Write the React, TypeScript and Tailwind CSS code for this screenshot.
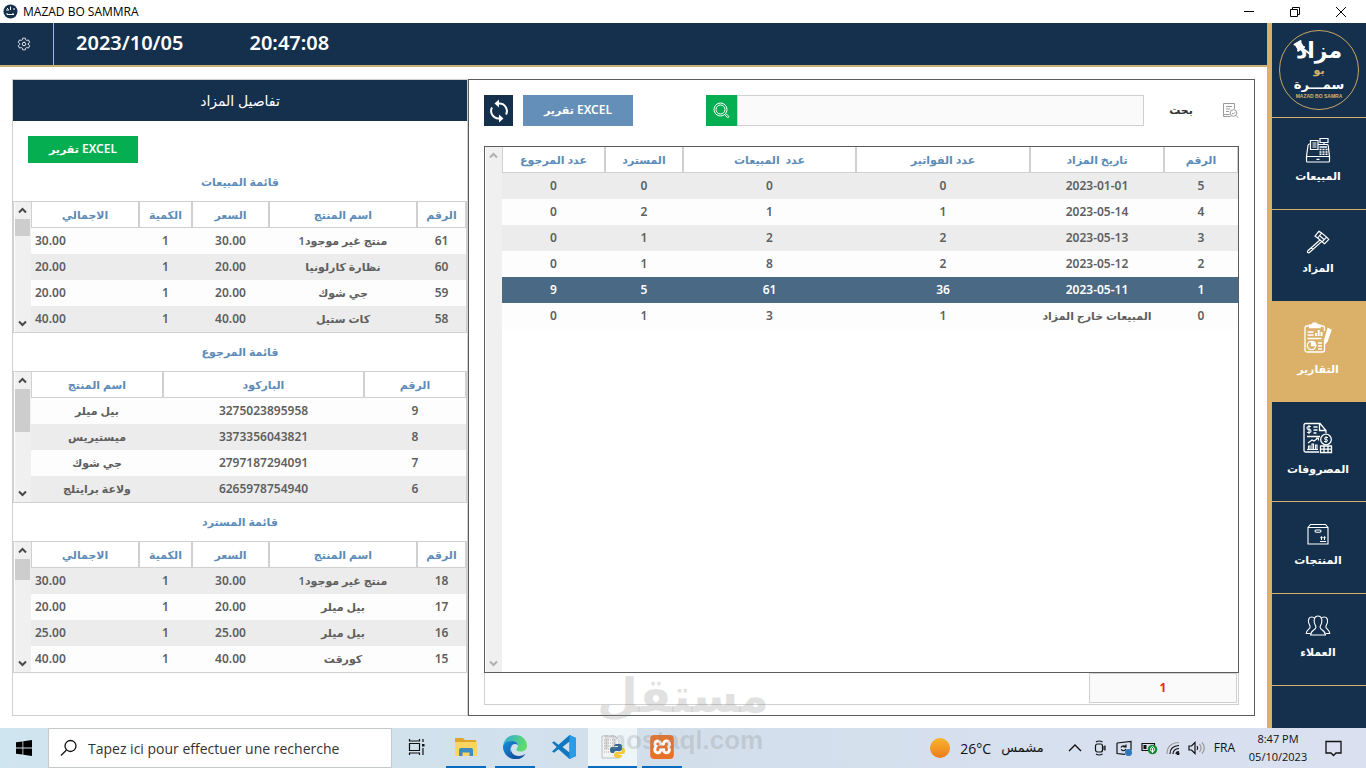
import type { ReactNode } from "react";
import { IoSettingsOutline } from "react-icons/io5";
import { SiXampp } from "react-icons/si";

type Column = { label: string; width: string; left?: boolean };

const saleColumns: Column[] = [
  { label: "الاجمالي", width: "w-[108px]", left: true },
  { label: "الكمية", width: "w-[53px]" },
  { label: "السعر", width: "w-[77px]" },
  { label: "اسم المنتج", width: "w-[148px]" },
  { label: "الرقم", width: "w-[49px]" },
];

const returnColumns: Column[] = [
  { label: "اسم المنتج", width: "w-[132px]" },
  { label: "الباركود", width: "w-[201px]" },
  { label: "الرقم", width: "w-[102px]" },
];

const auctionColumns: Column[] = [
  { label: "عدد المرجوع", width: "w-[103px]" },
  { label: "المسترد", width: "w-[78px]" },
  { label: "عدد  المبيعات", width: "w-[173px]" },
  { label: "عدد الفواتير", width: "w-[174px]" },
  { label: "تاريخ المزاد", width: "w-[134px]" },
  { label: "الرقم", width: "w-[74px]" },
];

const sales = [
  ["30.00", "1", "30.00", "منتج غير موجود1", "61"],
  ["20.00", "1", "20.00", "نظارة كارلونيا", "60"],
  ["20.00", "1", "20.00", "جي شوك", "59"],
  ["40.00", "1", "40.00", "كات ستيل", "58"],
];

const returned = [
  ["بيل ميلر", "3275023895958", "9"],
  ["ميستيريس", "3373356043821", "8"],
  ["جي شوك", "2797187294091", "7"],
  ["ولاعة برايتلج", "6265978754940", "6"],
];

const refunded = [
  ["30.00", "1", "30.00", "منتج غير موجود1", "18"],
  ["20.00", "1", "20.00", "بيل ميلر", "17"],
  ["25.00", "1", "25.00", "بيل ميلر", "16"],
  ["40.00", "1", "40.00", "كورقت", "15"],
];

const auctions = [
  ["0", "0", "0", "0", "2023-01-01", "5"],
  ["0", "2", "1", "1", "2023-05-14", "4"],
  ["0", "1", "2", "2", "2023-05-13", "3"],
  ["0", "1", "8", "2", "2023-05-12", "2"],
  ["9", "5", "61", "36", "2023-05-11", "1"],
  ["0", "1", "3", "1", "المبيعات خارج المزاد", "0"],
];

function Arrow({ up = false, muted = false }: { up?: boolean; muted?: boolean }) {
  return (
    <svg width="9" height="7" viewBox="0 0 9 7" fill="none" stroke={muted ? "#b0b0b0" : "#484848"} strokeWidth="2">
      <path d={up ? "M1 5.5 4.5 2 8 5.5" : "M1 1.5 4.5 5 8 1.5"} />
    </svg>
  );
}

function ScrollBar({ thumb, muted }: { thumb?: string; muted?: boolean }) {
  return (
    <div className="flex w-[17px] shrink-0 flex-col border-x border-l-white border-r-[#f0f0f0] bg-[#f0f0f0]">
      <button aria-label="Scroll up" className="flex h-[17px] items-center justify-center">
        <Arrow up muted={muted} />
      </button>
      <div className="flex-1">{thumb && <div className={`${thumb} bg-[#cdcdcd]`} />}</div>
      <button aria-label="Scroll down" className="flex h-[17px] items-center justify-center">
        <Arrow muted={muted} />
      </button>
    </div>
  );
}

function DataTable({
  label,
  columns,
  rows,
  shade,
  selected,
}: {
  label: string;
  columns: Column[];
  rows: string[][];
  shade: 0 | 1;
  selected?: number;
}) {
  return (
    <table aria-label={label} className="w-full table-fixed border-separate border-spacing-0 self-start text-[12px] leading-4">
      <thead>
        <tr className="h-[26px] text-[#5d8cb8]">
          {columns.map((c, i) => (
            <th
              key={i}
              dir="auto"
              className={`${c.width} whitespace-pre border-x border-b border-[#d0d0d0] bg-white p-0 text-center text-[11px] font-semibold`}
            >
              {c.label}
            </th>
          ))}
        </tr>
      </thead>
      <tbody>
        {rows.map((row, r) => (
          <tr
            key={r}
            className={`h-[26px] ${
              r === selected ? "bg-[#496984] text-white" : r % 2 === shade ? "bg-[#ececec] text-[#5f5f5f]" : "bg-[#fdfdfd] text-[#5f5f5f]"
            }`}
          >
            {row.map((cell, i) => (
              <td
                key={i}
                dir="auto"
                className={`whitespace-nowrap py-0 font-semibold ${columns[i].left ? "px-1 text-left" : "px-0 text-center"} ${
                  /[0-9]{2}|^[0-9]$/.test(cell) ? "text-[12px]" : "text-[11px]"
                }`}
              >
                {cell}
              </td>
            ))}
          </tr>
        ))}
      </tbody>
    </table>
  );
}

function SideList({ title, thumb, children }: { title: string; thumb: string; children: ReactNode }) {
  return (
    <section>
      <h2 dir="rtl" className="flex h-[38px] items-center justify-center text-[11px] font-semibold text-[#5d8cb8]">
        {title}
      </h2>
      <div className="flex h-[132px] border border-[#d0d0d0]">
        <ScrollBar thumb={thumb} />
        {children}
      </div>
    </section>
  );
}

function NavItem({ label, tall, active, children }: { label: string; tall?: boolean; active?: boolean; children: ReactNode }) {
  return (
    <a
      href="#"
      className={`flex flex-col items-center border-b border-[#dbb068] pr-0.5 text-white ${tall ? "h-[100px] gap-[7px] pt-5" : "h-[92px] gap-1 pt-[18px]"} ${
        active ? "bg-[#dbb068]" : ""
      }`}
    >
      <span className={`flex w-8 items-center justify-center ${tall ? "h-8" : "h-7"}`}>{children}</span>
      <span dir="rtl" className="text-[11px] leading-4 font-bold">
        {label}
      </span>
    </a>
  );
}

function RegisterIcon() {
  return (
    <svg width="26" height="26" viewBox="0 0 26 26" fill="none" stroke="white" strokeWidth="1.2">
      <path d="M1.5 19.5h23v4.5a1 1 0 0 1-1 1h-21a1 1 0 0 1-1-1zM1.500 19.5 3 8.500q.3-1.500 1.600-1.500h1M13 7.500h9q1 0 1.200 1l1.300 11M11.500 22.300h3" />
      <path d="M5.500 3.500h7.500v9H5.500zM7.500 6h4M7.500 8h4M7.500 10h4M15 1.500h8v4h-8zM19 5.500v2" />
      <path d="M14.500 10h7.500" strokeWidth="1.500" />
      <path d="M14.500 12.500h8M14.500 15h8M14.500 17.300h8" strokeWidth="1.600" strokeDasharray="2 1" />
    </svg>
  );
}

function GavelIcon() {
  return (
    <svg width="24" height="24" viewBox="0 0 24 24" fill="none" stroke="white" strokeWidth="1.2" strokeLinejoin="round">
      <path d="M9 6.200 13 1.200l2.600 1.800-3.900 5zM18.500 13.800l4.300-4.500-2.200-2.200-4.500 4.700zM11.700 8l4.400 3.800M15.600 3l5 4.100M14 6l4 3.500M13.700 10.300 1.800 20.800q-.8 1 .1 1.700.9.700 1.800-.2L15.300 11.900M5.300 18l1.500 1.500" />
    </svg>
  );
}

function ReportIcon() {
  return (
    <svg width="28" height="32" viewBox="0 0 28 32" fill="none" stroke="white" strokeWidth="1.3">
      <path d="M20.500 20v8a2 2 0 0 1-2 2H3a2 2 0 0 1-2-2V6a2 2 0 0 1 2-2h15.500a2 2 0 0 1 2 2v3" />
      <path d="M5.500 5.500V3H8q.5-2 2.700-2t2.800 2H16v2.500z" fill="white" />
      <path d="M3.500 10h6M3.500 13h6M3.500 16.500h14M14 21h4M14 24h4M14 27h4" />
      <path d="M12 14V11M14.700 14V8M17.500 14v-4" strokeWidth="2" />
      <circle cx="7.500" cy="23.500" r="4.200" />
      <path d="M7.500 19.300v4.200h4.200a4.200 4.200 0 0 0-4.200-4.200" fill="white" />
      <path d="m24 6.500 3 1.500-4 11.500-2.300 2.500-.2-3.500z" fill="white" />
    </svg>
  );
}

function ExpensesIcon() {
  return (
    <svg width="30" height="32" viewBox="0 0 30 32" fill="none" stroke="white" strokeWidth="1.3">
      <path d="M23 11V8.500l-6-7H2.500A1.500 1.500 0 0 0 1 3v25.500A1.500 1.500 0 0 0 2.500 30H16M16.500 1.500v7H23M10.500 5h4M10.500 8h4M10.500 11h3M4 14.500h13" />
      <path d="M7.800 4.500H5.500a1 1 0 0 0 0 3h1a1 1 0 0 1 0 3H4.200M6 3v9M4 27.500h11M5.500 27v-3h1.500v3M9 27v-5h1.500v5M12.500 27v-4H14v4M5 21l4-3 2 1 4-3M13 16h2.500v2.500" strokeWidth="1.100" />
      <circle cx="23" cy="17.500" r="5.300" fill="#15304d" />
      <path d="M25 15.500h-2.500a1 1 0 0 0 0 2h1a1 1 0 0 1 0 2H21M23 14v7" strokeWidth="1" />
      <path d="M17.500 24h11v6.500h-11zM17.500 27.200h11M21 24v6.500M25 24v6.500" />
    </svg>
  );
}

function BoxIcon() {
  return (
    <svg width="22" height="22" viewBox="0 0 22 22" fill="none" stroke="white" strokeWidth="1.1">
      <path d="M1 4.500h20V21H1zM1 4.500 3.500 1.500h15L21 4.500M13 18.500h6M14.500 17v-3M17.500 17v-3M13.500 15l1-1.200 1 1.200M16.500 15l1-1.200 1 1.200" />
      <rect x="8" y="7" width="6" height="2.200" rx="1.1" />
    </svg>
  );
}

function PeopleIcon() {
  return (
    <svg width="26" height="22" viewBox="0 0 26 22" fill="none" stroke="white" strokeWidth="1.1" strokeLinejoin="round">
      <path d="M10 3.500Q9 2 6.700 2C4 2 3 4.500 3.600 7.500c.4 2 1.500 2.500 1.500 4.500 0 2-3.700 2.500-3.900 6.500H5M16 3.500Q17 2 19.300 2c2.700 0 3.700 2.500 3.100 5.500-.4 2-1.500 2.500-1.500 4.500 0 2 3.700 2.500 3.900 6.500H21" />
      <path d="M13 1C9.500 1 8.800 4 9.300 7.500c.3 2 1.600 3 1.600 5 0 2.500-5 2-5.400 7.500h15c-.4-5.500-5.400-5-5.400-7.500 0-2 1.300-3 1.600-5C17.200 4 16.500 1 13 1z" />
    </svg>
  );
}

function Logo() {
  return (
    <div className="flex h-[95px] items-center justify-center border-b border-[#dbb068]">
      <div
        dir="rtl"
        className="relative flex size-20 flex-col items-center rounded-full border border-[#c9a563] pt-1.5 font-['DejaVu_Sans',sans-serif] font-bold text-white"
      >
        <span className="text-[22px] leading-[27px]">مزاد</span>
        <span className="text-[11px] leading-[13px] text-[#dbb068]">بو</span>
        <span className="text-[13px] leading-4">سمـــرة</span>
        <span dir="ltr" className="font-['Liberation_Sans',sans-serif] text-[5px] leading-[6px] whitespace-nowrap text-[#dbb068]">
          MAZAD BO SAMRA
        </span>
        <svg className="absolute top-2 left-3" width="20" height="18" viewBox="0 0 20 18">
          <g transform="rotate(-30 8 7)" fill="white">
            <rect x="4" y="3" width="7" height="7" />
            <rect x="3" y="2" width="9" height="2" rx="1" />
            <rect x="3" y="9" width="9" height="2" rx="1" />
          </g>
          <path d="m10 9 8 6" stroke="white" strokeWidth="2" />
        </svg>
      </div>
    </div>
  );
}

function TaskButton({ label, open, current, children }: { label: string; open?: boolean; current?: boolean; children: ReactNode }) {
  return (
    <button
      aria-label={label}
      className={`flex h-10 w-[49px] flex-col items-center ${current ? "bg-[#edf5f9]" : ""}`}
    >
      <span className="flex flex-1 items-center">{children}</span>
      <span className={`h-0.5 ${current ? "w-full" : "w-10"} ${open ? "bg-[#0a6cc0]" : ""}`} />
    </button>
  );
}

function Taskbar() {
  return (
    <footer className="flex h-10 shrink-0 items-center bg-linear-to-r from-[#cfe5ef] via-[#d2dfeb] to-[#dae0f0] font-['Open_Sans',sans-serif] text-[#111]">
      <button aria-label="Start" className="flex h-10 w-12 items-center justify-center">
        <svg width="16" height="16" viewBox="0 0 16 16">
          <path d="M0 2.300 6.500 1.400v6.200H0zM7.300 1.300 16 0v7.600H7.300zM0 8.400h6.500v6.200L0 13.700zM7.300 8.400H16V16l-8.700-1.300z" />
        </svg>
      </button>
      <label className="flex h-10 w-[344px] items-center gap-2.5 border border-[#c4c9cc] bg-white pr-3 pl-[11px]">
        <svg width="18" height="18" viewBox="0 0 18 18" fill="none" stroke="#111" strokeWidth="1.3">
          <circle cx="10.500" cy="7" r="5.500" />
          <path d="M6.500 11 1 16.500" />
        </svg>
        <input
          aria-label="Recherche"
          placeholder="Tapez ici pour effectuer une recherche"
          className="min-w-0 flex-1 bg-transparent text-[14px] outline-none placeholder:text-[#333]"
        />
      </label>
      <div className="flex items-center">
        <TaskButton label="Task view">
          <svg width="18" height="16" viewBox="0 0 18 16" fill="none" stroke="#111" strokeWidth="1.2">
            <path d="M1.500 4.500h10v7h-10zM1.500 0v2h10V0M1.500 16v-2h10v2M15 0v3M15 9v7" />
            <path d="M14 5h2.500v2.500H14z" fill="#111" stroke="none" />
          </svg>
        </TaskButton>
        <TaskButton label="Explorer" open>
          <svg width="24" height="20" viewBox="0 0 24 20">
            <path d="M1 1h8l2 2h11v16H1z" fill="#e0a62b" />
            <path d="M1 5h22v14H1z" fill="#fcd462" />
            <path d="M5 19v-6q0-2 2-2h10q2 0 2 2v6h-3.500v-3.500h-7V19z" fill="#3c8dc5" />
          </svg>
        </TaskButton>
        <TaskButton label="Edge" open>
          <svg width="24" height="24" viewBox="0 0 24 24">
            <defs>
              <linearGradient id="edge-top" x1="0" y1="0" x2="1" y2="0.3">
                <stop stopColor="#2aa7e0" />
                <stop offset="1" stopColor="#5fdc6a" />
              </linearGradient>
              <linearGradient id="edge-low" x1="0" y1="0" x2="1" y2="1">
                <stop stopColor="#1990d8" />
                <stop offset="1" stopColor="#0c479a" />
              </linearGradient>
            </defs>
            <path d="M0 11C1 4 6 0 12 0c7 0 12 5 12 10.500 0 4-3 6-6.500 6-3 0-4-1-4-2s1.500-1.500 1.500-4S12.500 6 9 6 2 8 0 11z" fill="url(#edge-top)" />
            <path d="M0 11c1.500-3.500 5-5 8.500-5 4 0 6.500 2 6.500 4.500-.5-1-2-1.500-3-1.500-3 0-4.500 3-4.500 6 0 5 5 8.500 10 8-2 .8-3.500 1-5.500 1C5 24 0 18 0 12z" fill="url(#edge-low)" />
            <path d="M9 11c-3 5 1 10 7 10 3 0 5-1 6.500-2.500C21 21.500 18 24 14.500 24 9 23 6 18 9 11z" fill="#1454a3" />
          </svg>
        </TaskButton>
        <TaskButton label="Visual Studio Code">
          <svg width="24" height="24" viewBox="0 0 24 24">
            <path d="M17.500 0 24 3v18l-6.500 3L6.500 14.300 2 17.700 0 16.500 4.700 12 0 7.500l2-1.200 4.500 3.400zM17.500 6.500 10.500 12l7 5.500z" fill="#1178c0" />
            <path d="M17.500 0 24 3v18l-6.500 3z" fill="#2a9be6" />
          </svg>
        </TaskButton>
        <TaskButton label="Python" open current>
          <svg width="24" height="24" viewBox="0 0 24 24">
            <path d="M1 1h13l4 4v18H1z" fill="#f3f3f3" stroke="#b9c0c4" />
            <path d="M3 5h12M3 8h12M3 11h12M3 14h8M3 17h5" stroke="#aaa" strokeDasharray="1 1" />
            <path d="M15 9h4q2 0 2 2v3q0 2-2 2h-4q-2 0-2 2h-2q-2 0-2-3t2-3h6v-1h-4q0-2 2-2z" fill="#34698f" />
            <path d="M21 13h1q2 0 2 3t-2 3h-5v1h4q0 3-3 3h-2q-3 0-3-3 0-3 3-3h3q2 0 2-2z" fill="#f6c934" />
          </svg>
        </TaskButton>
        <TaskButton label="XAMPP" open>
          <span className="flex size-6 items-center justify-center overflow-hidden rounded-sm bg-white text-[#e8722a]">
            <SiXampp size={24} />
          </span>
        </TaskButton>
      </div>
      <div className="ml-auto flex items-center pr-6">
        <span className="size-5 rounded-full bg-linear-to-b from-[#f8b52c] to-[#ec7a1e]" />
        <span className="ml-2.5 text-[14px]">26°C</span>
        <span dir="rtl" className="ml-2.5 font-['DejaVu_Sans',sans-serif] text-[13px]">
          مشمس
        </span>
        <button aria-label="Hidden icons" className="ml-6">
          <svg width="14" height="10" viewBox="0 0 14 10" fill="none" stroke="#111" strokeWidth="1.4">
            <path d="m1 8 6-6 6 6" />
          </svg>
        </button>
        <div className="ml-3 flex items-center gap-2">
          <svg width="14" height="16" viewBox="0 0 14 16" fill="none" stroke="#111" strokeWidth="1.2">
            <rect x="1.500" y="4" width="7" height="8" rx="2" />
            <path d="M8.500 7H11V5.500v5V9H8.500M2 2Q5 0 8.500 2M2 14q3 2 6.500 0" />
          </svg>
          <svg width="17" height="17" viewBox="0 0 17 17" fill="none" stroke="#111" strokeWidth="1.2">
            <path d="M1 3 15 1.500V10M1 3v10.500l8 .8M5 7.500q1-2 3.500-1.500L10 7M10 4.500V7H7.500M10 9q-1 2-3 1.700L5 9.500" />
            <circle cx="12.500" cy="12.500" r="3.500" fill="#2b78bd" stroke="none" />
          </svg>
          <svg width="17" height="14" viewBox="0 0 17 14" fill="none" stroke="#111" strokeWidth="1.2">
            <path d="M1 2.500h12.500v7H1z" />
            <path d="M2.500 4h3v4h-3z" fill="#111" stroke="none" />
            <circle cx="11.500" cy="8.500" r="4.800" fill="#168a35" stroke="none" />
            <path d="M11.500 12V7M9.500 8.500q0 2 2 2 2 0 2-2 0-2-2-3-2 1-2 3" stroke="white" strokeWidth="1" />
          </svg>
          <svg width="14" height="14" viewBox="0 0 14 14" fill="none" stroke="#111" strokeWidth="1.2">
            <path d="M1 13Q1 2 13 1.500" stroke="#999" />
            <path d="M4 13q0-8 9-8.500M7 13q0-5 6-5.500M10 13q0-2.500 3-2.500" />
            <circle cx="12" cy="12.500" r="1" fill="#111" />
          </svg>
          <svg width="18" height="14" viewBox="0 0 18 14" fill="none" stroke="#111" strokeWidth="1.2">
            <path d="M1 5h2.500L7 1.500v11L3.500 9H1zM9 5q1.500 2 0 4" />
            <path d="M11.500 3q3 4 0 8M14 1.500q4.500 5.500 0 11" stroke="#999" />
          </svg>
        </div>
        <span className="ml-2 text-[12px]">FRA</span>
        <div className="ml-2.5 flex w-[66px] flex-col items-center text-[11px] leading-[18px] whitespace-nowrap">
          <span>8:47 PM</span>
          <span>05/10/2023</span>
        </div>
        <button aria-label="Notifications" className="ml-3.5">
          <svg width="17" height="17" viewBox="0 0 17 17" fill="none" stroke="#111" strokeWidth="1.300">
            <path d="M1 1.500h15v11.500h-5L8.500 15.500 6 13H1z" />
          </svg>
        </button>
      </div>
    </footer>
  );
}

export default function App() {
  return (
    <div className="relative flex min-h-screen flex-col overflow-hidden bg-white font-['Noto_Sans','DejaVu_Sans',sans-serif]">
      <header className="flex h-[23px] shrink-0 items-center bg-white font-['Open_Sans',sans-serif] text-[12px] text-black">
        <svg className="ml-[3px]" width="15" height="15" viewBox="0 0 15 15">
          <circle cx="7.500" cy="7.500" r="7" fill="#15304d" />
          <path d="M3 6h3M4 4l1.500 1.500M7.500 2.500V6M10 5h2M4 10.500h7M4 9v1.500M10 9v1.500" stroke="white" strokeWidth="1" />
        </svg>
        <span className="ml-[5px]">MAZAD BO SAMMRA</span>
        <div className="ml-auto flex items-center gap-[34px] pr-[19px]">
          <button aria-label="Minimize">
            <svg width="12" height="12" viewBox="0 0 12 12" stroke="black"><path d="M1 5.500h10" /></svg>
          </button>
          <button aria-label="Restore">
            <svg width="12" height="12" viewBox="0 0 12 12" stroke="black" fill="none"><path d="M1.500 3.500h7v7h-7zM3.500 3.500v-2h7v7h-2" /></svg>
          </button>
          <button aria-label="Close">
            <svg width="12" height="12" viewBox="0 0 12 12" stroke="black"><path d="m1 1 10 10M11 1 1 11" /></svg>
          </button>
        </div>
      </header>

      <div className="flex flex-1">
        <main className="flex min-w-0 flex-1 flex-col">
          <div className="flex h-11 shrink-0 items-stretch border-b-2 border-[#c9b077] bg-[#15304d] text-white">
            <button aria-label="Settings" className="flex w-[54px] items-center justify-center border-r border-[#dbb068] pr-1.5">
              <IoSettingsOutline size={14} />
            </button>
            <div className="flex items-center gap-[66px] pb-0.5 pl-[22px] text-[20px] font-semibold">
              <span>2023/10/05</span>
              <span>20:47:08</span>
            </div>
          </div>

          <div className="flex flex-1 p-3">
            <aside className="flex w-[456px] shrink-0 flex-col border border-[#d0d0d0]">
              <h1 dir="rtl" className="flex h-[41px] items-center justify-center bg-[#15304d] text-[14px] font-medium text-white">
                تفاصيل المزاد
              </h1>
              <button dir="rtl" className="mt-[15px] ml-[15px] h-[27px] w-[110px] self-start bg-[#05ae50] pb-0.5 text-[12px] font-semibold text-white">
                EXCEL <span className="text-[11px]">تقرير</span>
              </button>
              <SideList title="قائمة المبيعات" thumb="h-[17px]">
                <DataTable label="قائمة المبيعات" columns={saleColumns} rows={sales} shade={1} />
              </SideList>
              <SideList title="قائمة المرجوع" thumb="h-[43px]">
                <DataTable label="قائمة المرجوع" columns={returnColumns} rows={returned} shade={1} />
              </SideList>
              <SideList title="قائمة المسترد" thumb="h-[21px]">
                <DataTable label="قائمة المسترد" columns={saleColumns} rows={refunded} shade={0} />
              </SideList>
            </aside>

            <section className="flex min-w-0 flex-1 flex-col border border-[#5c5c5c] px-[15px] pt-[15px] pb-2.5">
              <div className="flex h-[31px] items-center">
                <button aria-label="Refresh" className="flex h-full w-[29px] items-center justify-center bg-[#15304d]">
                  <svg width="20" height="24" viewBox="0 0 20 24" fill="none" stroke="white" strokeWidth="2">
                    <path d="M9 4.500h1.500a7.500 7.500 0 0 1 6.500 11M11 19.500H9.500A7.500 7.500 0 0 1 3 8.500" />
                    <path d="M10 .5v8L5.500 4.500zM10 15.500v8l4.500-4z" fill="white" stroke="none" />
                  </svg>
                </button>
                <button dir="rtl" className="ml-2.5 h-full w-[110px] bg-[#648fb8] pb-0.5 text-[12px] font-semibold text-white">
                  EXCEL <span className="text-[11px]">تقرير</span>
                </button>
                <button aria-label="Search" className="ml-[73px] flex size-[31px] items-center justify-center bg-[#05ae50]">
                  <svg width="17" height="17" viewBox="0 0 17 17" fill="none" stroke="white" strokeWidth="1">
                    <circle cx="7.500" cy="7.500" r="6.500" />
                    <circle cx="7.500" cy="7.500" r="4.500" />
                    <path d="m11.500 12.500 1.200-1.200 3 3q.3 1.500-1.200 1.200z" />
                  </svg>
                </button>
                <input id="query" type="text" className="h-full min-w-0 flex-1 border border-[#d0d0d0] bg-[#fafafa] px-2 text-[12px] outline-none" />
                <label htmlFor="query" dir="rtl" className="w-[74px] text-center text-[11px] font-bold text-[#333]">
                  بحت
                </label>
                <svg className="ml-1" width="17" height="17" viewBox="0 0 17 17" fill="none" stroke="#9b9b9b">
                  <path d="M12.500 7V1.500h-11v11h6M1.500 12.500v2h7M4 4.500h6M4 7h4.500M4 9.500h3" />
                  <circle cx="11.500" cy="11" r="3.300" />
                  <path d="m14 13.500 2.500 2.500M10 11l1.200 1.200 2-2" />
                </svg>
              </div>

              <div className="mt-5 flex flex-1 border border-[#5c5c5c]">
                <ScrollBar muted />
                <DataTable label="المزادات" columns={auctionColumns} rows={auctions} shade={0} selected={4} />
              </div>
              <div className="flex h-8 justify-end border border-t-0 border-[#d0d0d0] pr-px pb-px">
                <output className="flex w-[148px] items-center justify-center border border-[#d0d0d0] bg-[#fafafa] text-[12px] font-bold text-[#dc2b22]">
                  1
                </output>
              </div>
            </section>
          </div>
        </main>

        <nav className="flex w-[99px] shrink-0 flex-col border-l-[5px] border-[#dbb068] bg-[#15304d]">
          <Logo />
          <NavItem label="المبيعات"><RegisterIcon /></NavItem>
          <NavItem label="المزاد"><GavelIcon /></NavItem>
          <NavItem label="التقارير" tall active><ReportIcon /></NavItem>
          <NavItem label="المصروفات" tall><ExpensesIcon /></NavItem>
          <NavItem label="المنتجات"><BoxIcon /></NavItem>
          <NavItem label="العملاء"><PeopleIcon /></NavItem>
        </nav>
      </div>

      <Taskbar />

      <div className="pointer-events-none absolute bottom-3 left-[600px] flex w-[166px] flex-col items-center font-['DejaVu_Sans',sans-serif] font-bold text-[#8a8a8a]/25">
        <span dir="rtl" className="text-[47px] leading-[56px] whitespace-nowrap">مستقل</span>
        <span className="font-['Liberation_Sans',sans-serif] text-[26px] leading-8">mostaql.com</span>
      </div>
    </div>
  );
}
